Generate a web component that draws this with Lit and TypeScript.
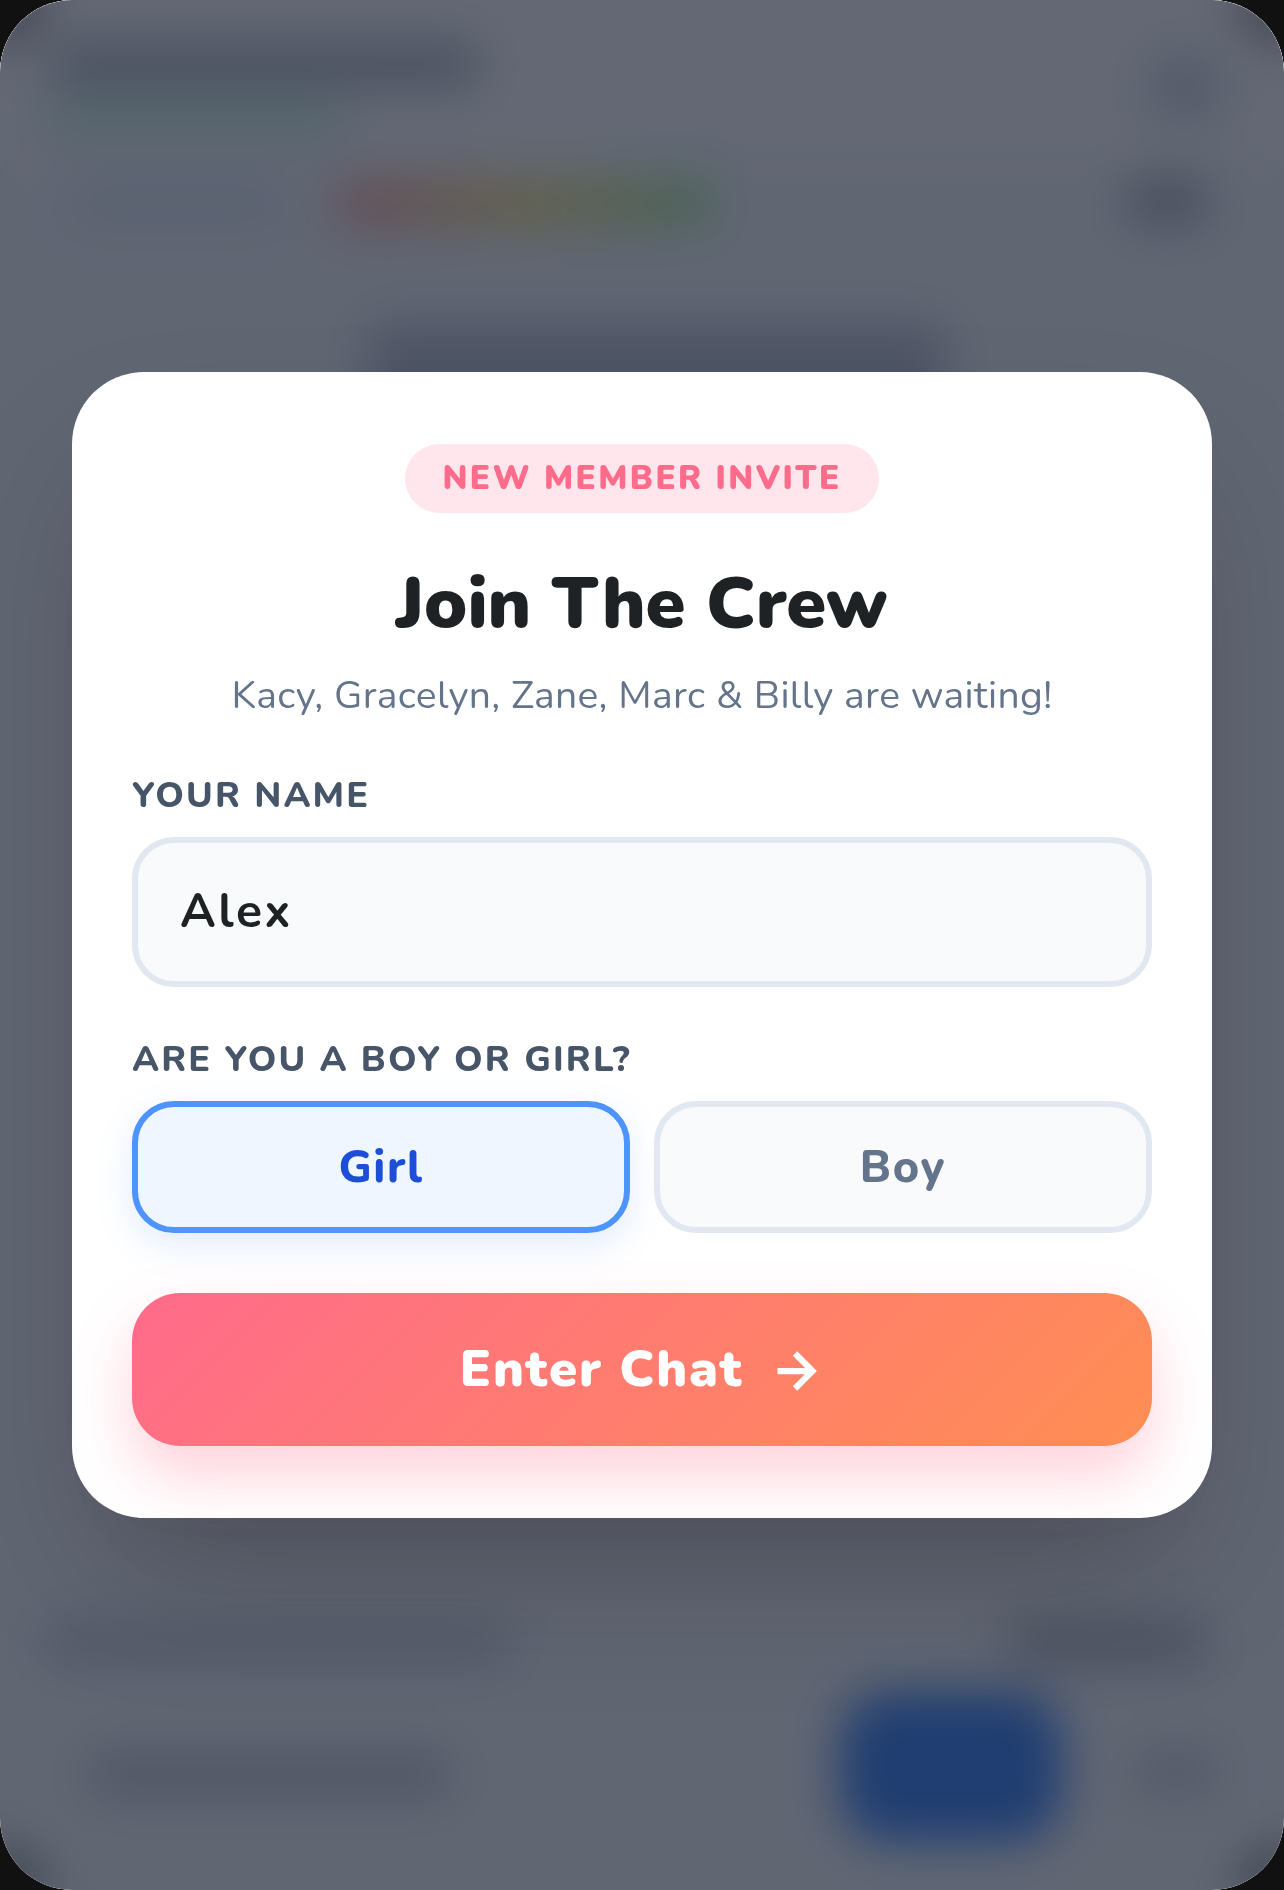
import { LitElement, html, css } from "lit";
import { customElement } from "lit/decorators.js";

@customElement("app-root")
export class AppRoot extends LitElement {
  static styles = css`
    :host {
      display: block;
      width: 1284px;
      height: 1890px;
      background: #111;
      overflow: hidden;
      font-family: Nunito, Lato, "Noto Sans", sans-serif;
    }
    * { box-sizing: border-box; }
    .screen {
      position: relative;
      width: 428px;
      height: 630px;
      border-radius: 24px;
      overflow: hidden;
      background: #fff;
      transform: scale(3);
      transform-origin: 0 0;
    }
    .back {
      display: flex;
      flex-direction: column;
      height: 100%;
      background: #f8f9fb;
    }
    .b { border-radius: 4px; flex: none; }
    .head { display: flex; justify-content: space-between; padding: 15px 22px 0 17px; height: 56px; background: #fff; }
    .head-left { display: flex; flex-direction: column; gap: 5px; }
    .title-b { width: 142px; height: 13px; background: #b0b3bb; }
    .status-b { width: 100px; height: 13px; margin-left: -2px; background: #d0f2e8; }
    .icon-b { width: 22px; height: 20px; margin-top: 4px; background: #d0d4dc; }
    .bar { display: flex; align-items: center; padding: 2px 26px 0 24px; height: 20px; }
    .bar-label { width: 70px; height: 12px; background: #dfe6f3; }
    .rainbow { width: 126px; height: 17px; margin-left: 18px; background: linear-gradient(90deg, #ffb4b4, #ffe890 50%, #b4f0ac); }
    .bar-end { width: 26px; height: 14px; margin-left: auto; background: #a8abb4; }
    .msg { height: 34px; width: 192px; margin: 32px 0 0 123px; background: #c2c6d2; }
    .spacer { flex: 1; }
    .foot-a { display: flex; justify-content: space-between; align-items: center; padding: 0 26px 0 14px; }
    .foot-a-l { width: 156px; height: 13px; background: #cdd1da; }
    .foot-a-r { width: 66px; height: 15px; background: #bcbfc8; }
    .foot-b { display: flex; align-items: flex-start; padding: 9px 22px 16px 30px; }
    .foot-b-l { width: 120px; height: 15px; margin-top: 20px; background: #c8cacf; }
    .send { width: 74px; height: 50px; margin-left: 130px; border-radius: 16px; background: #3f86f6; }
    .foot-b-r { width: 28px; height: 13px; margin-top: 20px; margin-left: auto; background: #cfd1d7; }

    .overlay {
      position: absolute;
      inset: 0;
      display: flex;
      align-items: center;
      justify-content: center;
      background: rgba(15, 23, 42, 0.65);
      backdrop-filter: blur(8px);
    }
    .card {
      width: 380px;
      padding: 24px 20px;
      border-radius: 24px;
      background: #fff;
      box-shadow: 0 25px 50px -12px rgba(0, 0, 0, 0.25);
      display: flex;
      flex-direction: column;
    }
    .pill {
      align-self: center;
      height: 23px;
      line-height: 23px;
      padding: 0 12px;
      border-radius: 12px;
      background: #ffe5ec;
      color: #ff6b8b;
      font-size: 11px;
      font-weight: 900;
      letter-spacing: 0.8px;
      text-align: center;
      width: 158px;
      white-space: nowrap;
    }
    h1 {
      margin: 14px 0 0;
      text-align: center;
      font-size: 24px;
      line-height: 33px;
      font-weight: 900;
      color: #1f2225;
    }
    .sub {
      margin: 5px 0 0;
      text-align: center;
      font-size: 13px;
      line-height: 18px;
      letter-spacing: 0.12px;
      color: #64748b;
    }
    label, .lab {
      display: block;
      margin-top: 16px;
      font-size: 12px;
      line-height: 16px;
      font-weight: 800;
      letter-spacing: 0.7px;
      color: #475569;
    }
    input {
      display: block;
      width: 100%;
      height: 50px;
      margin-top: 6px;
      padding: 0 14px;
      border: 2px solid #e2e8f0;
      border-radius: 14px;
      background: #f8fafc;
      font: 700 16px Nunito, Lato, "Noto Sans", sans-serif;
      letter-spacing: 0.85px;
      color: #1f2225;
      outline: none;
    }
    .choices { display: flex; gap: 8px; margin-top: 6px; }
    .choice {
      flex: 1;
      height: 44px;
      border: 2px solid #e2e8f0;
      border-radius: 14px;
      background: #f8fafc;
      color: #64748b;
      font: 800 15px Nunito, Lato, "Noto Sans", sans-serif;
      letter-spacing: 0.6px;
    }
    .choice.on {
      border-color: #4d94ff;
      background: #eff6ff;
      color: #1d4ed8;
      letter-spacing: 0.5px;
      box-shadow: 0 4px 12px rgba(59, 130, 246, 0.15);
    }
    .enter {
      display: flex;
      align-items: center;
      justify-content: center;
      gap: 7px;
      height: 51px;
      margin-top: 20px;
      border: none;
      border-radius: 16px;
      background: linear-gradient(135deg, #ff6b8b, #ff8e53);
      box-shadow: 0 10px 20px rgba(255, 107, 139, 0.3);
      color: #fff;
      font: 900 17px Nunito, Lato, "Noto Sans", sans-serif;
      letter-spacing: 0.6px;
    }
    .enter svg { width: 20px; height: 20px; }
  `;

  render() {
    return html`
      <div class="screen">
        <div class="back">
          <div class="head">
            <div class="head-left">
              <div class="b title-b"></div>
              <div class="b status-b"></div>
            </div>
            <div class="b icon-b"></div>
          </div>
          <div class="bar">
            <div class="b bar-label"></div>
            <div class="b rainbow"></div>
            <div class="b bar-end"></div>
          </div>
          <div class="b msg"></div>
          <div class="spacer"></div>
          <div class="foot-a">
            <div class="b foot-a-l"></div>
            <div class="b foot-a-r"></div>
          </div>
          <div class="foot-b">
            <div class="b foot-b-l"></div>
            <div class="send"></div>
            <div class="b foot-b-r"></div>
          </div>
        </div>
        <div class="overlay">
          <form class="card" @submit=${(e: Event) => e.preventDefault()}>
            <div class="pill">NEW MEMBER INVITE</div>
            <h1>Join The Crew</h1>
            <p class="sub">Kacy, Gracelyn, Zane, Marc &amp; Billy are waiting!</p>
            <label for="name">YOUR NAME</label>
            <input id="name" .value=${"Alex"} />
            <div class="lab">ARE YOU A BOY OR GIRL?</div>
            <div class="choices">
              <button type="button" class="choice on">Girl</button>
              <button type="button" class="choice">Boy</button>
            </div>
            <button type="submit" class="enter">
              <span>Enter Chat</span>
              <svg viewBox="0 0 24 24" fill="none" stroke="currentColor" stroke-width="2.5">
                <path d="M5 12h14M12 5l7 7-7 7" />
              </svg>
            </button>
          </form>
        </div>
      </div>
    `;
  }
}
